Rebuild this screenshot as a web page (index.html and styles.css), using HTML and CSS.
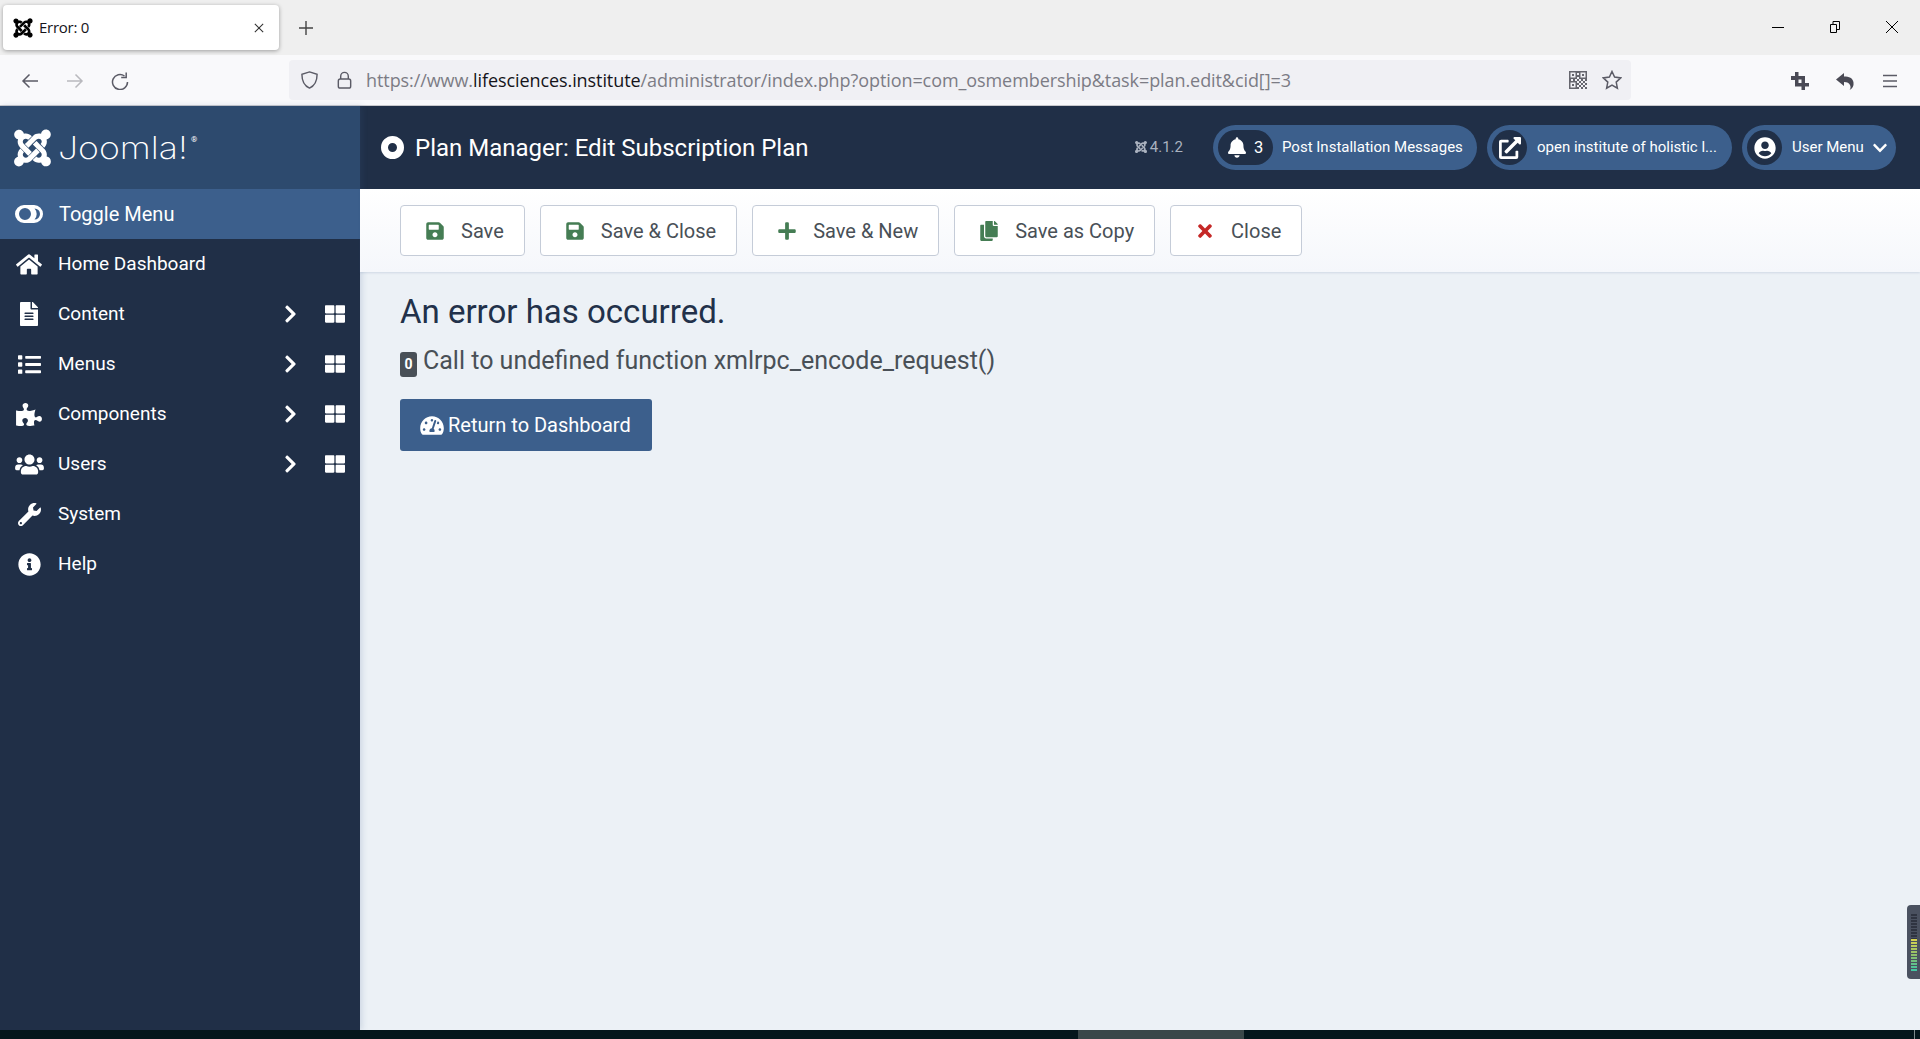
FILE: index.html
```html
<!DOCTYPE html>
<html lang="en">
<head>
<meta charset="utf-8">
<title>Error: 0</title>
<link rel="stylesheet" href="styles.css">
</head>
<body>
<svg class="defs" width="0" height="0" aria-hidden="true">
  <symbol id="i-joomla" viewBox="0 0 448 512"><path d="M.6 92.1C.6 58.8 27.4 32 60.4 32c30 0 54.5 21.9 59.2 50.2 32.6-7.6 67.1.6 96.5 30l-44.3 44.3c-20.5-20.5-42.6-16.3-55.4-3.5-14.3 14.3-14.3 37.9 0 52.2l99.5 99.5-44 44.3c-87.7-87.2-49.7-49.7-99.8-99.7-26.8-26.5-35-64.8-24.8-98.9C20.4 144.6.6 120.7.6 92.1zm129.5 116.4l44.3 44.3c10-10 89.7-89.7 99.7-99.8 14.3-14.3 37.6-14.3 51.9 0 12.8 12.8 17 35-3.5 55.4l44 44.3c31.2-31.2 38.5-67.6 28.9-101.2 29.2-4.1 51.9-29.2 51.9-59.5 0-33.2-26.8-60.1-59.8-60.1-30.3 0-55.4 22.5-59.5 51.6-33.8-9.9-71.7-1.5-98.3 25.1-18.3 19.1-71.1 71.5-99.6 99.9zm266.3 152.2c8.2-32.7-.9-68.5-26.3-93.9-11.8-12-97.8-97.6-97.8-97.6l-44.3 44.3 97.9 97.6c14.3 14.3 14.3 37.6 0 51.9-12.8 12.8-35 17-55.4-3.5l-44 44.3c27.6 30.2 68 38.8 102.7 28 5.5 27.4 29.7 48.1 58.9 48.1 33 0 59.8-26.8 59.8-60.1 0-30.2-22.5-55-51.6-59.1zm-84.3-53.1l-44-44.3c-87 86.4-50.4 50.4-99.7 99.8-14.3 14.3-37.6 14.3-51.9 0-13.1-13.4-16.9-35.3 3.2-55.4l-44-44.3c-30.2 30.2-38 65.2-29.5 98.3-26.7 6-46.8 29.9-46.8 58.4 0 33.3 26.8 60.1 59.8 60.1 28.6 0 52.5-19.8 58.6-46.7 32.7 8.2 68.5-.6 94-26 32.1-32 12.2-12.4 100.3-100.5z"/></symbol>
  <symbol id="i-save" viewBox="0 0 448 512"><path d="M433.941 129.941l-83.882-83.882A48 48 0 0 0 316.118 32H48C21.49 32 0 53.49 0 80v352c0 26.51 21.49 48 48 48h352c26.51 0 48-21.49 48-48V163.882a48 48 0 0 0-14.059-33.941zM224 416c-35.346 0-64-28.654-64-64 0-35.346 28.654-64 64-64s64 28.654 64 64c0 35.346-28.654 64-64 64zm96-304.52V212c0 6.627-5.373 12-12 12H76c-6.627 0-12-5.373-12-12V108c0-6.627 5.373-12 12-12h228.52c3.183 0 6.235 1.264 8.485 3.515l3.48 3.48A11.996 11.996 0 0 1 320 111.48z"/></symbol>
  <symbol id="i-plus" viewBox="0 0 448 512"><path d="M416 208H272V64c0-17.67-14.33-32-32-32h-32c-17.67 0-32 14.33-32 32v144H32c-17.67 0-32 14.33-32 32v32c0 17.67 14.33 32 32 32h144v144c0 17.67 14.33 32 32 32h32c17.67 0 32-14.33 32-32V304h144c17.67 0 32-14.33 32-32v-32c0-17.67-14.33-32-32-32z"/></symbol>
  <symbol id="i-copy" viewBox="0 0 448 512"><path d="M320 448v40c0 13.255-10.745 24-24 24H24c-13.255 0-24-10.745-24-24V120c0-13.255 10.745-24 24-24h72v296c0 30.879 25.121 56 56 56h168zm0-344V0H152c-13.255 0-24 10.745-24 24v368c0 13.255 10.745 24 24 24h272c13.255 0 24-10.745 24-24V128H344c-13.2 0-24-10.8-24-24zm120.971-31.029L375.029 7.029A24 24 0 0 0 358.059 0H352v96h96v-6.059a24 24 0 0 0-7.029-16.97z"/></symbol>
  <symbol id="i-times" viewBox="0 0 352 512"><path d="M242.72 256l100.07-100.07c12.28-12.28 12.28-32.19 0-44.48l-22.24-22.24c-12.28-12.28-32.19-12.28-44.48 0L176 189.28 75.93 89.21c-12.28-12.28-32.19-12.28-44.48 0L9.21 111.45c-12.28 12.28-12.28 32.19 0 44.48L109.28 256 9.21 356.07c-12.28 12.28-12.28 32.19 0 44.48l22.24 22.24c12.28 12.28 32.2 12.28 44.48 0L176 322.72l100.07 100.07c12.28 12.28 32.2 12.28 44.48 0l22.24-22.24c12.28-12.28 12.28-32.19 0-44.48L242.72 256z"/></symbol>
  <symbol id="i-home" viewBox="0 0 576 512"><path d="M280.37 148.26L96 300.11V464a16 16 0 0 0 16 16l112.06-.29a16 16 0 0 0 15.92-16V368a16 16 0 0 1 16-16h64a16 16 0 0 1 16 16v95.64a16 16 0 0 0 16 16.05L464 480a16 16 0 0 0 16-16V300L295.67 148.26a12.19 12.19 0 0 0-15.3 0zM571.6 251.47L488 182.56V44.05a12 12 0 0 0-12-12h-56a12 12 0 0 0-12 12v72.61L318.47 43a48 48 0 0 0-61 0L4.34 251.47a12 12 0 0 0-1.6 16.9l25.5 31A12 12 0 0 0 45.15 301l235.22-193.74a12.19 12.19 0 0 1 15.3 0L530.9 301a12 12 0 0 0 16.9-1.6l25.5-31a12 12 0 0 0-1.7-16.93z"/></symbol>
  <symbol id="i-file" viewBox="0 0 384 512"><path d="M224 136V0H24C10.7 0 0 10.7 0 24v464c0 13.3 10.7 24 24 24h336c13.3 0 24-10.7 24-24V160H248c-13.2 0-24-10.8-24-24zm64 236c0 6.6-5.4 12-12 12H108c-6.6 0-12-5.4-12-12v-8c0-6.6 5.4-12 12-12h168c6.6 0 12 5.4 12 12v8zm0-64c0 6.6-5.4 12-12 12H108c-6.6 0-12-5.4-12-12v-8c0-6.6 5.4-12 12-12h168c6.6 0 12 5.4 12 12v8zm0-72v8c0 6.6-5.4 12-12 12H108c-6.6 0-12-5.4-12-12v-8c0-6.6 5.4-12 12-12h168c6.6 0 12 5.4 12 12zm96-114.1v6.1H256V0h6.1c6.4 0 12.5 2.5 17 7l97.9 98c4.5 4.5 7 10.6 7 16.9z"/></symbol>
  <symbol id="i-list" viewBox="0 0 512 512"><path d="M80 368H16a16 16 0 0 0-16 16v64a16 16 0 0 0 16 16h64a16 16 0 0 0 16-16v-64a16 16 0 0 0-16-16zm0-320H16A16 16 0 0 0 0 64v64a16 16 0 0 0 16 16h64a16 16 0 0 0 16-16V64a16 16 0 0 0-16-16zm0 160H16a16 16 0 0 0-16 16v64a16 16 0 0 0 16 16h64a16 16 0 0 0 16-16v-64a16 16 0 0 0-16-16zm416 176H176a16 16 0 0 0-16 16v32a16 16 0 0 0 16 16h320a16 16 0 0 0 16-16v-32a16 16 0 0 0-16-16zm0-320H176a16 16 0 0 0-16 16v32a16 16 0 0 0 16 16h320a16 16 0 0 0 16-16V80a16 16 0 0 0-16-16zm0 160H176a16 16 0 0 0-16 16v32a16 16 0 0 0 16 16h320a16 16 0 0 0 16-16v-32a16 16 0 0 0-16-16z"/></symbol>
  <symbol id="i-puzzle" viewBox="0 0 576 512"><path d="M519.442 288.651c-41.519 0-59.5 31.593-82.058 31.593C377.409 320.244 432 144 432 144s-196.288 80-196.288-3.297c0-35.827 36.288-46.25 36.288-85.985C272 19.216 243.885 0 210.539 0c-34.654 0-66.366 18.891-66.366 56.346 0 41.364 31.711 59.277 31.711 81.75C175.885 207.719 0 166.758 0 166.758v333.237s178.635 41.047 178.635-28.662c0-22.473-40-40.107-40-81.471 0-37.456 29.25-56.346 63.577-56.346 33.673 0 61.788 19.216 61.788 54.717 0 39.735-36.288 50.158-36.288 85.985 0 60.803 129.675 25.73 181.23 25.73 0 0-34.725-120.101 25.827-120.101 35.962 0 46.423 36.152 86.308 36.152C556.712 416 576 387.99 576 354.443c0-34.199-18.962-65.792-56.558-65.792z"/></symbol>
  <symbol id="i-users" viewBox="0 0 640 512"><path d="M96 224c35.3 0 64-28.7 64-64s-28.7-64-64-64-64 28.7-64 64 28.7 64 64 64zm448 0c35.3 0 64-28.7 64-64s-28.7-64-64-64-64 28.7-64 64 28.7 64 64 64zm32 32h-64c-17.6 0-33.5 7.1-45.1 18.6 40.3 22.1 68.9 62 75.1 109.4h66c17.7 0 32-14.3 32-32v-32c0-35.3-28.7-64-64-64zm-256 0c61.9 0 112-50.1 112-112S381.9 32 320 32 208 82.1 208 144s50.1 112 112 112zm76.8 32h-8.3c-20.8 10-43.9 16-68.5 16s-47.6-6-68.5-16h-8.3C179.6 288 128 339.6 128 403.2V432c0 26.5 21.5 48 48 48h288c26.5 0 48-21.5 48-48v-28.8c0-63.6-51.6-115.2-115.2-115.2zm-223.7-13.4C161.5 263.1 145.6 256 128 256H64c-35.3 0-64 28.7-64 64v32c0 17.7 14.3 32 32 32h65.9c6.3-47.4 34.9-87.3 75.2-109.4z"/></symbol>
  <symbol id="i-wrench" viewBox="0 0 512 512"><path d="M507.73 109.1c-2.24-9.03-13.54-12.09-20.12-5.51l-74.36 74.36-67.88-11.31-11.31-67.88 74.36-74.36c6.62-6.62 3.43-17.9-5.66-20.16-47.38-11.74-99.55.91-136.58 37.93-39.64 39.64-50.55 97.1-34.05 147.2L18.74 402.76c-24.99 24.99-24.99 65.51 0 90.5 24.99 24.99 65.51 24.99 90.5 0l213.21-213.21c50.12 16.71 107.47 5.68 147.37-34.22 37.07-37.07 49.7-89.32 37.91-136.73zM64 472c-13.25 0-24-10.75-24-24 0-13.26 10.75-24 24-24s24 10.74 24 24c0 13.25-10.75 24-24 24z"/></symbol>
  <symbol id="i-info" viewBox="0 0 512 512"><path d="M256 8C119.043 8 8 119.083 8 256c0 136.997 111.043 248 248 248s248-111.003 248-248C504 119.083 392.957 8 256 8zm0 110c23.196 0 42 18.804 42 42s-18.804 42-42 42-42-18.804-42-42 18.804-42 42-42zm56 254c0 6.627-5.373 12-12 12h-88c-6.627 0-12-5.373-12-12v-24c0-6.627 5.373-12 12-12h12v-64h-12c-6.627 0-12-5.373-12-12v-24c0-6.627 5.373-12 12-12h64c6.627 0 12 5.373 12 12v100h12c6.627 0 12 5.373 12 12v24z"/></symbol>
  <symbol id="i-bell" viewBox="0 0 448 512"><path d="M224 512c35.32 0 63.97-28.65 63.97-64H160.03c0 35.35 28.65 64 63.97 64zm215.39-149.71c-19.32-20.76-55.47-51.99-55.47-154.29 0-77.7-54.48-139.9-127.94-155.16V32c0-17.67-14.32-32-31.98-32s-31.98 14.33-31.98 32v20.84C118.56 68.1 64.08 130.3 64.08 208c0 102.3-36.15 133.53-55.47 154.29-6 6.45-8.66 14.16-8.61 21.71.11 16.4 12.98 32 32.1 32h383.8c19.12 0 32-15.6 32.1-32 .05-7.55-2.61-15.27-8.61-21.71z"/></symbol>
  <symbol id="i-newtab" viewBox="0 0 512 512"><path d="M432,320H400a16,16,0,0,0-16,16V448H64V128H208a16,16,0,0,0,16-16V80a16,16,0,0,0-16-16H48A48,48,0,0,0,0,112V464a48,48,0,0,0,48,48H400a48,48,0,0,0,48-48V336A16,16,0,0,0,432,320ZM488,0h-128c-21.37,0-32.05,25.91-17,41l35.73,35.73L135,320.37a24,24,0,0,0,0,34L157.67,377a24,24,0,0,0,34,0L435.28,133.32,471,169c15,15,41,4.5,41-17V24A24,24,0,0,0,488,0Z"/></symbol>
  <symbol id="i-user" viewBox="0 0 496 512"><path d="M248 8C111 8 0 119 0 256s111 248 248 248 248-111 248-248S385 8 248 8zm0 96c48.6 0 88 39.4 88 88s-39.4 88-88 88-88-39.4-88-88 39.4-88 88-88zm0 344c-58.7 0-111.3-26.6-146.5-68.2 18.8-35.4 55.6-59.8 98.5-59.8 2.4 0 4.8.4 7.1 1.1 13 4.2 26.6 6.9 40.9 6.9 14.3 0 28-2.7 40.9-6.9 2.3-.7 4.7-1.1 7.1-1.1 42.9 0 79.7 24.4 98.5 59.8C359.3 421.4 306.7 448 248 448z"/></symbol>
  <symbol id="i-cright" viewBox="0 0 320 512"><path d="M285.476 272.971L91.132 467.314c-9.373 9.373-24.569 9.373-33.941 0l-22.667-22.667c-9.357-9.357-9.375-24.522-.04-33.901L188.505 256 34.484 101.255c-9.335-9.379-9.317-24.544.04-33.901l22.667-22.667c9.373-9.373 24.569-9.373 33.941 0L285.475 239.03c9.373 9.372 9.373 24.568.001 33.941z"/></symbol>
  <symbol id="i-cdown" viewBox="0 0 448 512"><path d="M207.029 381.476L12.686 187.132c-9.373-9.373-9.373-24.569 0-33.941l22.667-22.667c9.357-9.357 24.522-9.375 33.901-.04L224 284.505l154.745-154.021c9.379-9.335 24.544-9.317 33.901.04l22.667 22.667c9.373 9.373 9.373 24.569 0 33.941L240.971 381.476c-9.373 9.372-24.569 9.372-33.942 0z"/></symbol>
  <symbol id="i-grid" viewBox="0 0 512 512"><path d="M296 32h192c13.255 0 24 10.745 24 24v160c0 13.255-10.745 24-24 24H296c-13.255 0-24-10.745-24-24V56c0-13.255 10.745-24 24-24zm-80 0H24C10.745 32 0 42.745 0 56v160c0 13.255 10.745 24 24 24h192c13.255 0 24-10.745 24-24V56c0-13.255-10.745-24-24-24zM0 296v160c0 13.255 10.745 24 24 24h192c13.255 0 24-10.745 24-24V296c0-13.255-10.745-24-24-24H24c-13.255 0-24 10.745-24 24zm296 184h192c13.255 0 24-10.745 24-24V296c0-13.255-10.745-24-24-24H296c-13.255 0-24 10.745-24 24v160c0 13.255 10.745 24 24 24z"/></symbol>
  <symbol id="i-gauge" viewBox="0 0 576 512"><path d="M288 32C128.94 32 0 160.94 0 320c0 52.8 14.25 102.26 39.06 144.8 5.61 9.62 16.3 15.2 27.44 15.2h443c11.14 0 21.83-5.58 27.44-15.2C561.75 422.26 576 372.8 576 320c0-159.06-128.94-288-288-288zm0 64c14.71 0 26.58 10.13 30.32 23.65-1.11 2.26-2.64 4.23-3.45 6.67l-9.22 27.67c-5.13 3.49-10.97 6.01-17.64 6.01-17.67 0-32-14.33-32-32S270.33 96 288 96zM96 384c-17.67 0-32-14.33-32-32s14.33-32 32-32 32 14.33 32 32-14.33 32-32 32zm48-160c-17.67 0-32-14.33-32-32s14.33-32 32-32 32 14.33 32 32-14.33 32-32 32zm246.77-72.41l-61.33 184C343.13 347.33 352 364.54 352 384c0 11.72-3.38 22.55-8.88 32H232.88c-5.5-9.45-8.88-20.28-8.88-32 0-33.94 26.5-61.43 59.9-63.59l61.34-184.01c4.17-12.56 17.73-19.45 30.36-15.17 12.57 4.19 19.35 17.79 15.17 30.36zm14.66 57.2l15.52-46.55c3.47-1.29 7.13-2.23 11.05-2.23 17.67 0 32 14.33 32 32s-14.33 32-32 32c-11.38-.01-20.89-6.28-26.57-15.22zM480 384c-17.67 0-32-14.33-32-32s14.33-32 32-32 32 14.33 32 32-14.33 32-32 32z"/></symbol>
</svg>

<div class="browser">
  <div class="tabstrip">
    <div class="tab">
      <svg class="tab-fav"><use href="#i-joomla"/></svg>
      <span class="tab-title">Error: 0</span>
      <svg class="tab-x" viewBox="0 0 12 12"><path d="M1 1l10 10M11 1L1 11"/></svg>
    </div>
    <svg class="newtab" viewBox="0 0 16 16"><path d="M8 1v14M1 8h14"/></svg>
    <div class="winctl">
      <svg class="win" viewBox="0 0 12 12"><path d="M0 6.5h12"/></svg>
      <svg class="win" viewBox="0 0 12 12"><path d="M1.5 3.5h6v8h-6zM4 3.5v-3h6.5v8h-3"/></svg>
      <svg class="win" viewBox="0 0 12 12"><path d="M0 0l12 12M12 0L0 12"/></svg>
    </div>
  </div>
  <div class="navbar">
    <div class="nav-left">
      <svg class="nav-ic" viewBox="0 0 18 18"><path d="M17 9H2M8.5 2.5L2 9l6.5 6.5"/></svg>
      <svg class="nav-ic nav-off" viewBox="0 0 18 18"><path d="M1 9h15M9.500 2.500L16 9l-6.500 6.500"/></svg>
      <svg class="nav-ic" viewBox="0 0 18 18"><path d="M16.500 10A7.500 7.500 0 1 1 13.500 4M15.200 .5v5h-5"/></svg>
    </div>
    <div class="urlbar">
      <svg class="url-ic" viewBox="0 0 20 20"><path d="M10 1.500l8 2.500c0 7-2 12-8 14.500C4 16 2 11 2 4z"/></svg>
      <svg class="url-ic url-lock" viewBox="0 0 20 20"><rect x="3.500" y="9" width="13" height="9.500" rx="2"/><path d="M6 9V6a4 4 0 0 1 8 0v3"/></svg>
      <span class="url"><span class="url-dim">https://www.</span><span class="url-host">lifesciences.institute</span><span class="url-dim">/administrator/index.php?option=com_osmembership&amp;task=plan.edit&amp;cid[]=3</span></span>
      <svg class="qr" viewBox="0 0 18 18"><path d="M0 0h8v8H0zM1.500 1.500v5h5v-5zM3 3h2v2H3zM10 0h8v8h-8zM11.500 1.500v5h5v-5zM13 3h2v2h-2zM0 10h8v8H0zM1.500 11.500v5h5v-5zM3 13h2v2H3zM10 10h2v2h-2zM14 10h2v2h-2zM12 12h2v2h-2zM16 12h2v2h-2zM10 14h2v2h-2zM14 14h2v2h-2zM12 16h2v2h-2zM16 16h2v2h-2zM8 8h2v2H8zM0 8h2v2H0zM4 8h2v2H4zM12 8h2v2h-2zM16 8h2v2h-2zM8 0h2v2H8zM8 4h2v2H8zM8 12h2v2H8zM8 16h2v2H8z" fill-rule="evenodd"/></svg>
      <svg class="star" viewBox="0 0 20 20"><path d="M10 1.500l2.600 5.600 6.100.8-4.500 4.200 1.200 6.100L10 15.200l-5.400 3 1.200-6.100-4.500-4.200 6.100-.8z"/></svg>
    </div>
    <div class="nav-right">
      <svg class="tool" viewBox="0 0 18 18"><path d="M4 0h3.500v4H14v7h4v3.500h-4V18h-3.500v-3.500H4V8H0V4h4zM7.500 7.500V11H10.500V7.500z" fill-rule="evenodd"/></svg>
      <svg class="tool" viewBox="0 0 18 18"><path d="M8 1L0 7.500 8 14v-4c3.500 0 5 1 6 3 1 2 .5 4-.5 5 3-1.500 4.500-4 4-7.500C17 6 13 4.500 8 4.500z"/></svg>
      <svg class="tool tool-menu" viewBox="0 0 18 18"><path d="M2 3.500h14M2 9h14M2 14.500h14"/></svg>
    </div>
  </div>
</div>

<div class="app">
  <aside class="sidebar">
    <div class="logo">
      <svg class="logo-mark"><use href="#i-joomla"/></svg>
      <span class="logo-word">Joomla!</span><sup class="logo-reg">®</sup>
    </div>
    <nav class="menu">
      <a class="row row-toggle">
        <span class="row-ic"><svg class="toggle-ic" viewBox="0 0 28 18"><path d="M9 0h10a9 9 0 0 1 0 18H9A9 9 0 0 1 9 0zM10 3a6 6 0 1 0 0 12 6 6 0 1 0 0-12zM19.500 3.500a5.500 5.500 0 0 1 0 11 8 8 0 0 0 0-11z" fill-rule="evenodd"/></svg></span>
        <span class="row-label">Toggle Menu</span>
      </a>
      <a class="row"><span class="row-ic"><svg class="ic-home"><use href="#i-home"/></svg></span><span class="row-label">Home Dashboard</span></a>
      <a class="row"><span class="row-ic"><svg class="ic-file"><use href="#i-file"/></svg></span><span class="row-label">Content</span><svg class="chev"><use href="#i-cright"/></svg><svg class="grid"><use href="#i-grid"/></svg></a>
      <a class="row"><span class="row-ic"><svg class="ic-list"><use href="#i-list"/></svg></span><span class="row-label">Menus</span><svg class="chev"><use href="#i-cright"/></svg><svg class="grid"><use href="#i-grid"/></svg></a>
      <a class="row"><span class="row-ic"><svg class="ic-home"><use href="#i-puzzle"/></svg></span><span class="row-label">Components</span><svg class="chev"><use href="#i-cright"/></svg><svg class="grid"><use href="#i-grid"/></svg></a>
      <a class="row"><span class="row-ic"><svg class="ic-users"><use href="#i-users"/></svg></span><span class="row-label">Users</span><svg class="chev"><use href="#i-cright"/></svg><svg class="grid"><use href="#i-grid"/></svg></a>
      <a class="row"><span class="row-ic"><svg class="ic-list"><use href="#i-wrench"/></svg></span><span class="row-label">System</span></a>
      <a class="row"><span class="row-ic"><svg class="ic-info"><use href="#i-info"/></svg></span><span class="row-label">Help</span></a>
    </nav>
  </aside>
  <div class="main">
    <header class="topbar">
      <span class="title-dot"></span>
      <h2 class="title">Plan Manager: Edit Subscription Plan</h2>
      <span class="version"><svg class="ver-ic"><use href="#i-joomla"/></svg>4.1.2</span>
      <a class="pill pill-msg"><span class="pill-in pill-bell"><svg class="bell"><use href="#i-bell"/></svg><span class="bell-n">3</span></span><span class="pill-text">Post Installation Messages</span></a>
      <a class="pill pill-site"><span class="pill-in"><svg class="pill-ic"><use href="#i-newtab"/></svg></span><span class="pill-text">open institute of holistic l...</span></a>
      <a class="pill pill-user"><span class="pill-in"><svg class="pill-ic"><use href="#i-user"/></svg></span><span class="pill-text">User Menu</span><svg class="pill-chev"><use href="#i-cdown"/></svg></a>
    </header>
    <div class="toolbar">
      <button class="btn"><svg class="btn-ic"><use href="#i-save"/></svg>Save</button>
      <button class="btn"><svg class="btn-ic"><use href="#i-save"/></svg>Save &amp; Close</button>
      <button class="btn"><svg class="btn-ic"><use href="#i-plus"/></svg>Save &amp; New</button>
      <button class="btn"><svg class="btn-ic"><use href="#i-copy"/></svg>Save as Copy</button>
      <button class="btn"><svg class="btn-ic btn-ic-red"><use href="#i-times"/></svg>Close</button>
    </div>
    <main class="content">
      <h1 class="err-title">An error has occurred.</h1>
      <p class="err-msg"><span class="badge">0</span> Call to undefined function xmlrpc_encode_request()</p>
      <a class="return"><svg class="return-ic"><use href="#i-gauge"/></svg> Return to Dashboard</a>
    </main>
  </div>
</div>

<div class="taskbar">
  <span class="task-active"></span>
  <span class="clock">11:27:53</span>
  <span class="task-line"></span>
</div>
<div class="meter"><span class="meter-off"></span><span class="meter-on"></span></div>
</body>
</html>
```

FILE: styles.css
```css
html, body { margin: 0; padding: 0; height: 100%; }
body {
  display: flex;
  flex-direction: column;
  height: 1039px;
  overflow: hidden;
  font-family: Roboto, "Liberation Sans", sans-serif;
  background: #ecf1f6;
  position: relative;
}
.defs { position: absolute; }
svg { fill: currentColor; display: block; flex: none; }

/* browser chrome */
.browser { flex: none; height: 106px; border-bottom: 0; }
.tabstrip {
  height: 55px;
  background: #efefef;
  display: flex;
  align-items: flex-start;
  padding-left: 3px;
  box-sizing: border-box;
}
.tab {
  width: 276px;
  height: 45px;
  margin-top: 5px;
  background: #fff;
  border-radius: 4px;
  box-shadow: 0 1px 4px rgba(0,0,0,.35);
  display: flex;
  align-items: center;
  padding: 0 15px 0 10px;
  box-sizing: border-box;
  color: #15141a;
}
.tab-fav { width: 20px; height: 22px; color: #000; }
.tab-title {
  margin-left: 6px;
  flex: 1;
  font: 15px "Open Sans", "Liberation Sans", sans-serif;
  letter-spacing: -.25px;
  padding-bottom: 2px;
}
.tab-x { width: 10px; height: 10px; fill: none; stroke: #333; stroke-width: 1.3; }
.newtab { width: 16px; height: 16px; margin: 20px 0 0 19px; fill: none; stroke: #444; stroke-width: 1.4; }
.winctl { margin-left: auto; display: flex; gap: 45px; padding: 21px 22px 0 0; }
.win { width: 12px; height: 12px; fill: none; stroke: #000; stroke-width: 1; }
.navbar {
  height: 51px;
  box-sizing: border-box;
  background: #f9f9fb;
  border-bottom: 1px solid #c8c8cc;
  display: flex;
  align-items: center;
}
.nav-left { width: 289px; flex: none; display: flex; gap: 27px; padding: 1px 0 0 21px; box-sizing: border-box; }
.nav-ic { width: 18px; height: 18px; fill: none; stroke: #5b5b66; stroke-width: 1.5; }
.nav-off { stroke: #b9b9be; }
.urlbar {
  width: 1342px;
  height: 40px;
  background: #f0f0f4;
  border-radius: 4px;
  display: flex;
  align-items: center;
  box-sizing: border-box;
  padding: 0 9px 0 11px;
  color: #5b5b66;
}
.url-ic { width: 19px; height: 20px; fill: none; stroke: #5b5b66; stroke-width: 1.5; }
.url-lock { margin-left: 16px; }
.url {
  margin-left: 12px;
  flex: 1;
  font: 18px "Open Sans", "Liberation Sans", sans-serif;
  letter-spacing: -.08px;
  white-space: nowrap;
}
.url-dim { color: #7c7c85; }
.url-host { color: #15141a; }
.qr { width: 18px; height: 18px; fill: #66666e; }
.star { width: 20px; height: 20px; margin-left: 15px; fill: none; stroke: #5b5b66; stroke-width: 1.5; }
.nav-right { display: flex; gap: 27px; padding: 1px 0 0 160px; color: #5b5b66; }
.tool { width: 18px; height: 18px; fill: #4a4a55; }
.tool-menu { fill: none; stroke: #5b5b66; stroke-width: 1.6; }

/* app layout */
.app { flex: 1; min-height: 0; display: flex; }
.sidebar {
  width: 360px;
  flex: none;
  background: #202f47;
  color: #fff;
  box-shadow: 2px 0 6px rgba(60,95,140,.18);
  position: relative;
}
.logo {
  height: 83px;
  background: #2d4a6e;
  display: flex;
  align-items: center;
  padding-left: 14px;
}
.logo-mark { width: 37px; height: 42px; }
.logo-word {
  font: 200 31px Inter, Lato, sans-serif;
  margin-left: 7px;
  line-height: 1;
  transform: scaleX(1.15);
  transform-origin: left center;
}
.logo-reg { font-size: 8px; margin: -16px 0 0 20px; }
.row {
  height: 50px;
  display: flex;
  align-items: center;
  font-size: 19px;
  color: #fff;
  padding-right: 15px;
}
.row-toggle { background: #3c5f8c; font-size: 20px; }
.row-ic { width: 58px; flex: none; display: flex; justify-content: center; box-sizing: border-box; }
.row-label { flex: 1; padding-bottom: 2px; }
.row-toggle .row-label { margin-left: 1px; padding-bottom: 0; }
.toggle-ic { width: 28px; height: 18px; }
.ic-home { width: 26px; height: 23px; }
.ic-file { width: 18px; height: 24px; }
.ic-list { width: 23px; height: 23px; }
.ic-users { width: 29px; height: 23px; }
.ic-info { width: 23px; height: 23px; }
.chev { width: 13px; height: 20px; margin-right: 28px; }
.grid { width: 20px; height: 20px; }

/* top bar */
.main { flex: 1; min-width: 0; display: flex; flex-direction: column; }
.topbar {
  height: 83px;
  flex: none;
  background: #202f47;
  color: #fff;
  display: flex;
  align-items: center;
  padding-left: 21px;
  box-sizing: border-box;
}
.title-dot {
  width: 23px;
  height: 23px;
  box-sizing: border-box;
  border-radius: 50%;
  border: 7px solid #fff;
  background: #202f47;
}
.title { margin: 0 0 0 11px; font-size: 24px; font-weight: 400; flex: 1; white-space: nowrap; }
.version { display: flex; align-items: center; font-size: 15px; color: #aab2bf; margin-right: 30px; padding-bottom: 1px; }
.ver-ic { width: 12px; height: 14px; margin-right: 3px; }
.pill {
  height: 45px;
  border-radius: 23px;
  background: #3c5f8c;
  display: flex;
  align-items: center;
  padding-left: 5px;
  box-sizing: border-box;
  font-size: 15px;
  margin-right: 10px;
  color: #fff;
  white-space: nowrap;
}
.pill-user { margin-right: 24px; }
.pill-msg { width: 264px; }
.pill-site { width: 245px; }
.pill-user { width: 154px; }
.pill-in {
  width: 35px;
  height: 35px;
  border-radius: 18px;
  background: #202f47;
  display: flex;
  align-items: center;
  justify-content: center;
  flex: none;
}
.pill-bell { width: 55px; gap: 8px; padding-left: 10px; box-sizing: border-box; justify-content: flex-start; }
.bell { width: 18px; height: 21px; }
.bell-n { font-size: 16.500px; }
.pill-ic { width: 22px; height: 22px; }
.pill-text { padding-bottom: 2px; }
.pill-msg .pill-text { margin-left: 9px; }
.pill-site .pill-text { margin-left: 10px; }
.pill-user .pill-text { margin-left: 10px; }
.pill-chev { width: 16px; height: 16px; margin-left: 8px; }

/* toolbar */
.toolbar {
  height: 83px;
  flex: none;
  box-sizing: border-box;
  padding: 16px 0 0 40px;
  display: flex;
  gap: 15px;
  align-items: flex-start;
  background: linear-gradient(#fff, #f5f7fb);
  box-shadow: 0 1px 2px rgba(60,95,140,.16);
  position: relative;
}
.btn {
  height: 51px;
  display: flex;
  align-items: center;
  background: #fff;
  border: 1px solid #c5ccd8;
  border-radius: 4px;
  padding: 0 20px 0 24px;
  font: 20px Roboto, sans-serif;
  color: #495057;
  box-sizing: border-box;
}
.btn-ic { width: 20px; height: 20px; margin-right: 16px; color: #457d54; }
.btn-ic-red { color: #c52827; }

/* content */
.content { flex: 1; min-height: 0; padding: 20px 0 0 40px; }
.err-title { margin: 0; font-size: 33px; font-weight: 400; line-height: 40px; color: #22314a; }
.err-msg {
  margin: 11px 0 0;
  font-size: 25px;
  line-height: 36px;
  color: #495057;
  display: flex;
  gap: 6px;
}
.badge {
  width: 17px;
  height: 25px;
  margin-top: 9px;
  border-radius: 3px;
  background: #495057;
  color: #fff;
  font-size: 14px;
  font-weight: 700;
  line-height: 25px;
  text-align: center;
}
.return {
  display: inline-flex;
  align-items: center;
  gap: 4px;
  height: 52px;
  margin-top: 20px;
  padding: 0 21px 0 20px;
  box-sizing: border-box;
  border-radius: 3px;
  background: #3c5f8c;
  color: #fff;
  font-size: 20px;
}
.return-ic { width: 24px; height: 21px; }

/* OS overlay bits */
.taskbar {
  height: 9px;
  flex: none;
  background: #04161c;
  position: relative;
  overflow: hidden;
  color: #fff;
}
.task-active { position: absolute; left: 1078px; width: 166px; top: 0; height: 9px; background: #3a4749; }
.clock { position: absolute; left: 1778px; top: 6px; font-size: 15px; line-height: 18px; letter-spacing: 1px; }
.task-line { position: absolute; left: 1914px; top: 0; width: 1px; height: 9px; background: #7d8a8d; }
.meter {
  position: absolute;
  left: 1907px;
  top: 905px;
  width: 13px;
  height: 74px;
  background: #4a5160;
  border-radius: 4px 0 0 4px;
  display: flex;
  flex-direction: column;
  align-items: center;
  padding-top: 9px;
  box-sizing: border-box;
}
.meter-off {
  width: 6px;
  height: 25px;
  background: repeating-linear-gradient(#2f3441 0 2px, #4a5160 2px 3px);
}
.meter-on {
  width: 6px;
  height: 32px;
  background:
    repeating-linear-gradient(transparent 0 2px, #4a5160 2px 3px),
    linear-gradient(#d9d34f, #8fbf6a 50%, #3fc7a5);
}
```
